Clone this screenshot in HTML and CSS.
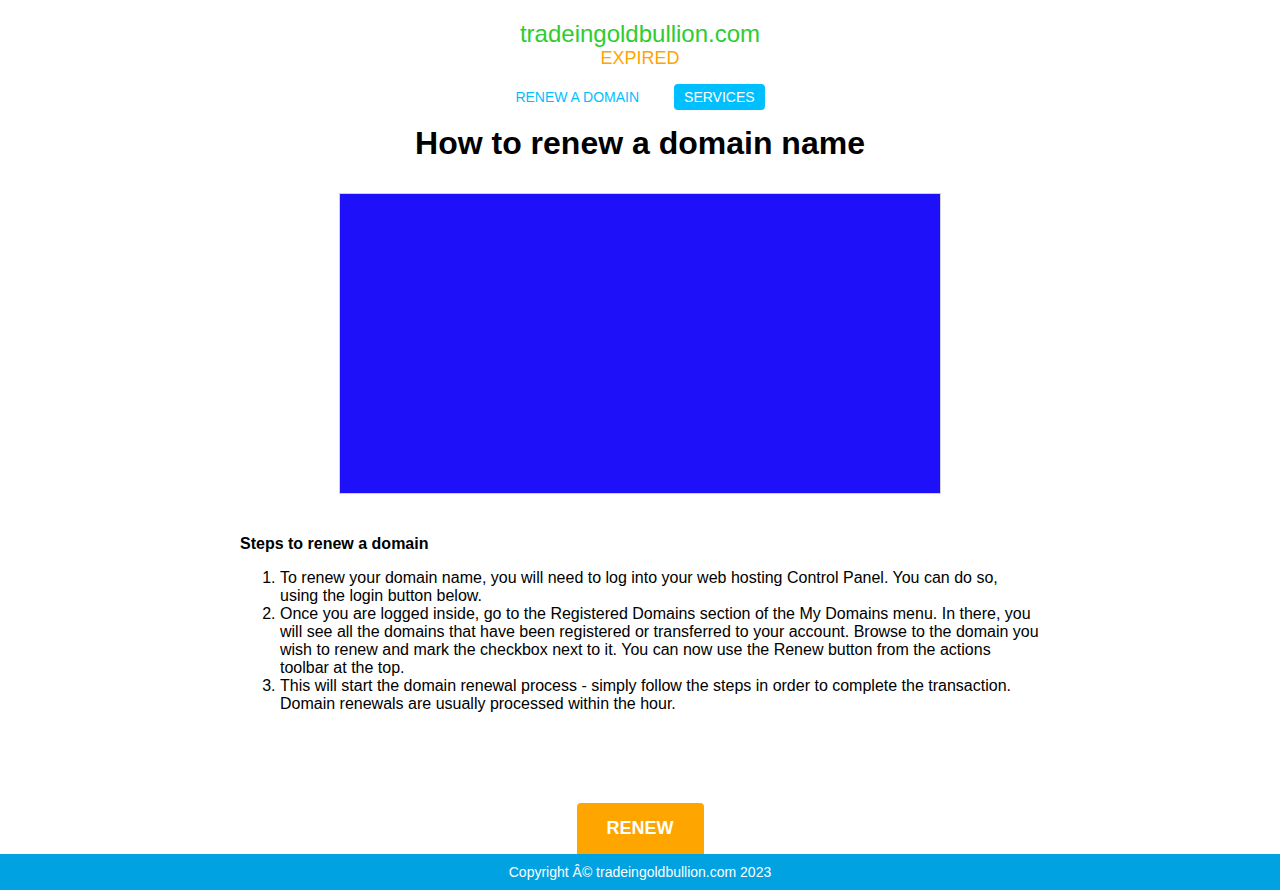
FILE: index.html
```html
<!DOCTYPE html>
<html>
<head>
<meta charset="utf-8">
<title>tradeingoldbullion.com</title>
<link rel="stylesheet" href="styles.css">
</head>
<body>
<div class="page">
  <header class="header">
    <div class="domain">tradeingoldbullion.com</div>
    <div class="status">EXPIRED</div>
    <nav class="nav">
      <a class="nav-link" href="#">RENEW A DOMAIN</a>
      <a class="nav-link nav-active" href="#">SERVICES</a>
    </nav>
  </header>
  <main class="main">
    <h1 class="title">How to renew a domain name</h1>
    <div class="media"></div>
    <section class="content">
      <p class="steps-title">Steps to renew a domain</p>
      <ol class="steps">
        <li>To renew your domain name, you will need to log into your web hosting Control Panel. You can do so, using the login button below.</li>
        <li>Once you are logged inside, go to the Registered Domains section of the My Domains menu. In there, you will see all the domains that have been registered or transferred to your account. Browse to the domain you wish to renew and mark the checkbox next to it. You can now use the Renew button from the actions toolbar at the top.</li>
        <li>This will start the domain renewal process - simply follow the steps in order to complete the transaction. Domain renewals are usually processed within the hour.</li>
      </ol>
    </section>
    <div class="action">
      <a class="renew-btn" href="#">RENEW</a>
    </div>
  </main>
  <footer class="footer">Copyright Â© tradeingoldbullion.com 2023</footer>
</div>
</body>
</html>
```
FILE: styles.css
```css
html, body {
  margin: 0;
  padding: 0;
  background: #ffffff;
}
body {
  font-family: "Liberation Sans", Arial, sans-serif;
  color: #000;
}
.page {
  display: flex;
  flex-direction: column;
  min-height: 890px;
}
.header {
  display: flex;
  flex-direction: column;
  align-items: center;
  padding-top: 20px;
}
.domain {
  font-size: 24px;
  line-height: 28px;
  color: #2ecc2e;
}
.status {
  font-size: 18px;
  line-height: 21px;
  color: #ffa500;
}
.nav {
  display: flex;
  justify-content: center;
  gap: 25px;
  margin-top: 15px;
  padding-right: 10px;
}
.nav-link {
  font-size: 14px;
  line-height: 16px;
  padding: 5px 10px;
  border-radius: 4px;
  color: #00bfff;
  text-decoration: none;
}
.nav-active {
  background: #00bfff;
  color: #ffffff;
}
.main {
  flex: 1;
  display: flex;
  flex-direction: column;
  align-items: center;
}
.title {
  font-size: 32px;
  line-height: 37px;
  font-weight: bold;
  margin: 15px 0 31px;
}
.media {
  width: 600px;
  height: 299px;
  border: 1px solid #d0d0d0;
  background: #1e10f8;
}
.content {
  width: 800px;
  margin-top: 41px;
}
.steps-title {
  font-size: 16px;
  line-height: 18px;
  font-weight: bold;
  margin: 0 0 16px;
}
.steps {
  margin: 0;
  padding-left: 40px;
  font-size: 16px;
  line-height: 18px;
}
.action {
  margin-top: auto;
  display: flex;
  justify-content: center;
}
.renew-btn {
  display: block;
  width: 127px;
  height: 51px;
  line-height: 51px;
  text-align: center;
  background: #ffa500;
  color: #ffffff;
  font-size: 18px;
  font-weight: bold;
  border-radius: 4px 4px 0 0;
  text-decoration: none;
}
.footer {
  height: 36px;
  line-height: 36px;
  background: #00a2e2;
  color: #ffffff;
  font-size: 14px;
  text-align: center;
}
```
